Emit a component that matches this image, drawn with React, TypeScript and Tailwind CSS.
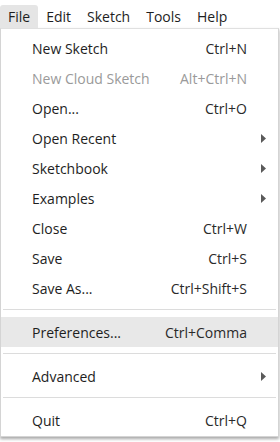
import React from 'react';

type Item =
  | { kind: 'item'; label: string; shortcut?: string; disabled?: boolean; submenu?: boolean; active?: boolean }
  | { kind: 'sep' };

const items: Item[] = [
  { kind: 'item', label: 'New Sketch', shortcut: 'Ctrl+N' },
  { kind: 'item', label: 'New Cloud Sketch', shortcut: 'Alt+Ctrl+N', disabled: true },
  { kind: 'item', label: 'Open...', shortcut: 'Ctrl+O' },
  { kind: 'item', label: 'Open Recent', submenu: true },
  { kind: 'item', label: 'Sketchbook', submenu: true },
  { kind: 'item', label: 'Examples', submenu: true },
  { kind: 'item', label: 'Close', shortcut: 'Ctrl+W' },
  { kind: 'item', label: 'Save', shortcut: 'Ctrl+S' },
  { kind: 'item', label: 'Save As...', shortcut: 'Ctrl+Shift+S' },
  { kind: 'sep' },
  { kind: 'item', label: 'Preferences...', shortcut: 'Ctrl+Comma', active: true },
  { kind: 'sep' },
  { kind: 'item', label: 'Advanced', submenu: true },
  { kind: 'sep' },
  { kind: 'item', label: 'Quit', shortcut: 'Ctrl+Q' },
];

const topMenus = ['File', 'Edit', 'Sketch', 'Tools', 'Help'];

function Arrow() {
  return (
    <svg width="5" height="9" viewBox="0 0 5 9" className="fill-[#5a5a5a]">
      <path d="M0 0 L5 4.5 L0 9 Z" />
    </svg>
  );
}

export default function App() {
  return (
    <div className="h-[442px] w-[280px] bg-white font-['Open_Sans',sans-serif] text-[14px] text-[#1e1e1e]">
      {/* menu bar */}
      <div className="flex h-[28px] items-end">
        {topMenus.map((m, i) => (
          <div
            key={m}
            className={
              i === 0
                ? 'flex h-[23px] items-center rounded-t-[3px] bg-[#e5e5e5] px-[8px]'
                : 'flex h-[23px] items-center px-[8px]'
            }
          >
            {m}
          </div>
        ))}
      </div>

      {/* dropdown */}
      <div className="w-[279px] border border-t-[#e0e0e0] border-l-[#d4d4d4] border-r-[#d4d4d4] border-b-[#d4d4d4] bg-white pt-[4px] pb-[1px] shadow-[0_2px_3px_rgba(0,0,0,0.35)]">
        {items.map((it, i) =>
          it.kind === 'sep' ? (
            <div key={i} className="mx-[2px] mt-[6px] mb-[7px] h-px bg-[#dcdcdc]" />
          ) : (
            <div
              key={i}
              className={
                'flex h-[30px] items-center pl-[31px] pr-[12px] ' + (it.active ? 'bg-[#e8e8e8]' : '')
              }
            >
              <span className={'flex-1 ' + (it.disabled ? 'text-[#9a9a9a]' : '')}>{it.label}</span>
              {it.shortcut && (
                <span className={'mr-[19px] ' + (it.disabled ? 'text-[#9a9a9a]' : 'text-[#2a2a2a]')}>
                  {it.shortcut}
                </span>
              )}
              {it.submenu && <Arrow />}
            </div>
          )
        )}
      </div>
    </div>
  );
}
